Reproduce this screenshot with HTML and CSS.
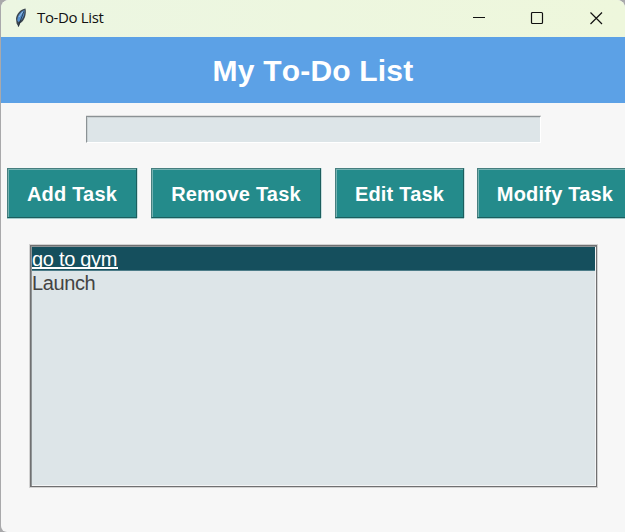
FILE: index.html
```
<!DOCTYPE html>
<html lang="en">
<head>
<meta charset="utf-8">
<title>To-Do List</title>
<link rel="stylesheet" href="styles.css">
</head>
<body>
<div class="window">
  <header class="titlebar">
    <svg class="feather" width="14" height="22" viewBox="0 0 14 22">
      <path d="M11.5 1.500 C6.500 2 2.200 7.500 2 12 L2.600 16.500 L4.600 20 L6 16.500 C10.500 14 12.800 7 11.500 1.500Z" fill="#3c4650"/>
      <path d="M10.500 3 C6.500 4.500 3.200 8.500 3.300 13.500 L4.500 15 C8.500 13 10.800 8.500 10.500 3Z" fill="#5590d0"/>
      <path d="M9.600 4.500 C8.500 9 6.500 12.500 4.400 19.500" fill="none" stroke="#1b2733" stroke-width="0.800"/>
      <path d="M8.800 4.800 L5 10" stroke="#9cc1e4" stroke-width="1"/>
    </svg>
    <span class="caption">To-Do List</span>
    <svg class="controls" width="132" height="14" viewBox="0 0 132 14" fill="none" stroke="#111" stroke-width="1.2">
      <path d="M0 6.500 H12" stroke-width="1"/>
      <rect x="58.500" y="1.500" width="11" height="11" rx="1"/>
      <path d="M117.500 1.500 L129 13 M129 1.500 L117.500 13"/>
    </svg>
  </header>
  <h1 class="heading">My To-Do List</h1>
  <input class="entry" type="text" aria-label="Task">
  <div class="buttons">
    <button class="add">Add Task</button>
    <button class="remove">Remove Task</button>
    <button class="edit">Edit Task</button>
    <button class="modify">Modify Task</button>
  </div>
  <ul class="tasks">
    <li class="selected"><span>go to gym</span></li>
    <li>Launch</li>
  </ul>
</div>
</body>
</html>
```
FILE: styles.css
```
* { box-sizing: border-box; }
body {
  margin: 0;
  height: 532px;
  overflow: hidden;
  background: #a9a9ab;
  font-family: "Liberation Sans", Arial, sans-serif;
  font-kerning: none;
}
.window {
  height: 532px;
  margin-left: 1px;
  overflow: hidden;
  background: #f7f7f7;
  border-radius: 8px 8px 0 6px;
}
.titlebar {
  display: flex;
  align-items: center;
  height: 37px;
  padding: 0 20px 2px 13px;
  background: linear-gradient(90deg, #ecf6e2, #eef7dc);
}
.caption {
  margin: -2px 0 0 9px;
  font: 15px "Open Sans", sans-serif;
  letter-spacing: -0.35px;
  color: #111;
}
.controls { margin-left: auto; }
.heading {
  height: 66px;
  margin: 0;
  background: #5ca1e6;
  color: #fff;
  font-size: 30px;
  line-height: 67px;
  text-align: center;
  letter-spacing: 0.2px;
}
.entry {
  display: block;
  width: 455px;
  height: 27px;
  margin: 13px 0 0 85px;
  padding: 0 4px;
  border: 1px solid;
  border-color: #8b9295 #fff #fff #8b9295;
  border-radius: 0;
  background: #dde5e8;
  box-shadow: inset 1px 1px #cbd2d4, 0 -1px #dfdfdf;
  outline: none;
}
.buttons {
  display: flex;
  gap: 13px;
  margin: 25px 0 0 6px;
}
.buttons button {
  flex: none;
  height: 50px;
  padding: 2px 0 0;
  border: 1px solid;
  border-color: #477f7f #1c5e5e #1c5e5e #477f7f;
  border-radius: 0;
  background: #248b8b;
  box-shadow: inset 1px 1px #75b2b2, 0 1px #a4cccc, 1px 0 #c8dfdf;
  color: #fff;
  font: bold 20px/46px "Liberation Sans", Arial, sans-serif;
  letter-spacing: 0.2px;
}
.add { width: 130px; }
.remove { width: 170px; }
.edit { width: 129px; }
.modify { width: 156px; }
.buttons .remove, .buttons .edit { margin-left: 1px; }
.buttons .edit { margin-right: 0; }
.tasks {
  width: 567px;
  height: 242px;
  margin: 27px 0 0 29px;
  padding: 1px;
  border: 1px solid #707071;
  background: #dde5e8;
  box-shadow: inset 1px 1px #8f9496, inset -1px -1px #f4f5f6, 0 0 0 1px #d2d2d2;
  list-style: none;
  color: #434343;
  font-size: 20px;
  line-height: 24px;
}
.tasks li {
  height: 24px;
  padding-left: 0;
  letter-spacing: -0.4px;
}
.tasks .selected {
  height: 24px;
  overflow: hidden;
  border-bottom: 1px solid #4c7c88;
  background: #154f5d;
  color: #fff;
}
.selected span {
  display: block;
  width: 86px;
  height: 22px;
  overflow: hidden;
  border-bottom: 2px solid #fff;
  letter-spacing: -0.3px;
}
```
